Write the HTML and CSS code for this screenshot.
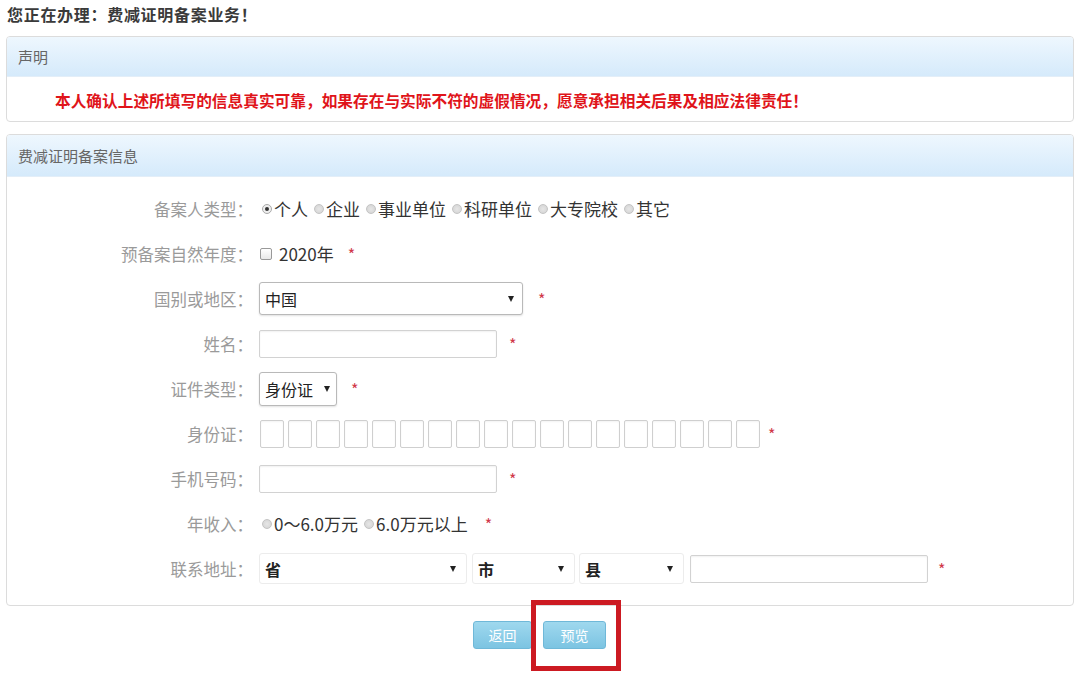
FILE: index.html
```html
<!DOCTYPE html>
<html lang="zh-CN">
<head>
<meta charset="utf-8">
<title>费减证明备案</title>
<link rel="stylesheet" href="styles.css">
</head>
<body>
<h1 class="title">您正在办理<span class="p">：</span>费减证明备案业务<span class="p">！</span></h1>

<section class="panel">
  <div class="panel-head">声明</div>
  <div class="panel-body notice">本人确认上述所填写的信息真实可靠<span class="p">，</span>如果存在与实际不符的虚假情况<span class="p">，</span>愿意承担相关后果及相应法律责任<span class="p">！</span></div>
</section>

<section class="panel panel-form">
  <div class="panel-head">费减证明备案信息</div>
  <div class="panel-body form">
    <div class="row">
      <div class="label">备案人类型<span class="p">：</span></div>
      <div class="ctrl">
        <span class="radio on"></span><span class="opt">个人</span>
        <span class="radio"></span><span class="opt">企业</span>
        <span class="radio"></span><span class="opt">事业单位</span>
        <span class="radio"></span><span class="opt">科研单位</span>
        <span class="radio"></span><span class="opt">大专院校</span>
        <span class="radio"></span><span class="opt">其它</span>
      </div>
    </div>
    <div class="row">
      <div class="label">预备案自然年度<span class="p">：</span></div>
      <div class="ctrl">
        <span class="check"></span><span class="opt year">2020年</span><span class="req">*</span>
      </div>
    </div>
    <div class="row">
      <div class="label">国别或地区<span class="p">：</span></div>
      <div class="ctrl">
        <div class="select sel-country"><span>中国</span><span class="arrow"></span></div><span class="req">*</span>
      </div>
    </div>
    <div class="row">
      <div class="label">姓名<span class="p">：</span></div>
      <div class="ctrl"><div class="input"></div><span class="req">*</span></div>
    </div>
    <div class="row">
      <div class="label">证件类型<span class="p">：</span></div>
      <div class="ctrl">
        <div class="select sel-id"><span>身份证</span><span class="arrow"></span></div><span class="req">*</span>
      </div>
    </div>
    <div class="row">
      <div class="label">身份证<span class="p">：</span></div>
      <div class="ctrl">
        <div class="idboxes">
          <span></span><span></span><span></span><span></span><span></span><span></span>
          <span></span><span></span><span></span><span></span><span></span><span></span>
          <span></span><span></span><span></span><span></span><span></span><span></span>
        </div><span class="req">*</span>
      </div>
    </div>
    <div class="row">
      <div class="label">手机号码<span class="p">：</span></div>
      <div class="ctrl"><div class="input"></div><span class="req">*</span></div>
    </div>
    <div class="row">
      <div class="label">年收入<span class="p">：</span></div>
      <div class="ctrl">
        <span class="radio"></span><span class="opt">0～6.0万元</span>
        <span class="radio"></span><span class="opt">6.0万元以上</span>
        <span class="req">*</span>
      </div>
    </div>
    <div class="row">
      <div class="label">联系地址<span class="p">：</span></div>
      <div class="ctrl addr">
        <div class="select flat sel-prov"><span>省</span><span class="arrow"></span></div>
        <div class="select flat sel-city"><span>市</span><span class="arrow"></span></div>
        <div class="select flat sel-county"><span>县</span><span class="arrow"></span></div>
        <div class="input addr-input"></div>
        <span class="req">*</span>
      </div>
    </div>
  </div>
</section>

<div class="actions">
  <button class="btn btn-back">返回</button>
  <span class="highlight"><button class="btn btn-preview">预览</button></span>
</div>
</body>
</html>
```

FILE: styles.css
```css
*, *::before, *::after { box-sizing: border-box; }
html, body { margin: 0; padding: 0; background: #fff; }
body {
  font-family: "Noto Sans CJK SC", "Noto Sans", "DejaVu Sans", sans-serif;
  color: #333;
  width: 1080px;
  height: 685px;
  overflow: hidden;
}
.p { font-family: "Noto Sans CJK TC", "Noto Sans CJK SC", sans-serif; }
.title {
  margin: 0;
  padding: 5px 0 0 7px;
  height: 36px;
  font-size: 16px;
  line-height: 18px;
  font-weight: bold;
  color: #3a3a3a;
  letter-spacing: 0.7px;
}
.panel {
  margin: 0 6px;
  border: 1px solid #dcdcdc;
  border-radius: 4px;
  background: #fff;
  overflow: hidden;
}
.panel-head {
  height: 40px;
  padding-left: 11px;
  font-size: 15px;
  line-height: 40px;
  color: #666;
  background: linear-gradient(#eef7fe, #d5eafb);
  border-bottom: 1px solid #e3eef8;
}
.notice {
  height: 44px;
  padding: 14px 0 0 48px;
  font-size: 15.7px;
  line-height: 20px;
  font-weight: bold;
  color: #e0141a;
}
.panel-form { margin-top: 12px; }
.panel-form .panel-head { height: 42px; line-height: 42px; }
.form { padding: 9px 0 14px; }
.row {
  display: flex;
  align-items: center;
  height: 45px;
}
.label {
  width: 246px;
  text-align: right;
  font-size: 16.5px;
  color: #9a9a9a;
  white-space: nowrap;
}
.ctrl {
  margin-left: 6px;
  display: flex;
  align-items: center;
  font-size: 17px;
  color: #333;
}
.radio {
  width: 10px;
  height: 10px;
  border-radius: 50%;
  border: 1px solid #c4c4c4;
  background: radial-gradient(circle, #e6e6e6 0, #d2d2d2 100%);
  margin: 0 2px 0 3px;
  position: relative;
}
.radio.on { background: #eee; border-color: #aaa; }
.radio.on::after {
  content: "";
  position: absolute;
  left: 2px; top: 2px;
  width: 4px; height: 4px;
  border-radius: 50%;
  background: #333;
}
.opt { margin-right: 3px; }
.check {
  width: 12px;
  height: 12px;
  border: 1px solid #999;
  border-radius: 2px;
  background: linear-gradient(#fff, #e8e8e8);
  margin: 0 7px 0 1px;
}
.year { margin-right: 0; }
.req {
  color: #d0384a;
  font-size: 16px;
  margin-left: 14px;
}
.select {
  display: flex;
  align-items: center;
  justify-content: space-between;
  border: 1px solid #b9b9b9;
  border-radius: 3px;
  background: #fff;
  box-shadow: 0 1px 2px rgba(0,0,0,0.12);
  padding: 0 8px 0 5px;
  font-size: 16px;
  color: #222;
}
.arrow {
  width: 0; height: 0;
  border-left: 3.5px solid transparent;
  border-right: 3.5px solid transparent;
  border-top: 6px solid #222;
}
.sel-country { width: 264px; height: 33px; }
.sel-country + .req { margin-left: 15px; }
.sel-id { width: 78px; height: 34px; padding-right: 6px; }
.input {
  width: 238px;
  height: 28px;
  border: 1px solid #d2d2d2;
  border-radius: 2px;
  box-shadow: inset 0 1px 2px rgba(0,0,0,0.06);
  background: #fff;
}
.input + .req { margin-left: 12px; }
.idboxes { display: flex; gap: 4px; margin-left: 1px; }
.idboxes span {
  width: 24px;
  height: 28px;
  border: 1px solid #cfcfcf;
  border-radius: 2px;
  box-shadow: inset 0 1px 2px rgba(0,0,0,0.05);
}
.idboxes + .req { margin-left: 8px; }
.select.flat {
  height: 31px;
  border: 1px solid #ececec;
  box-shadow: none;
  font-weight: bold;
  padding-right: 10px;
}
.sel-prov { width: 208px; }
.sel-city { width: 103px; margin-left: 5px; }
.sel-county { width: 105px; margin-left: 4px; }
.addr-input { margin-left: 6px; height: 28px; }
.addr .req { margin-left: 10px; }
.actions {
  display: flex;
  justify-content: center;
  align-items: center;
  gap: 11px;
  padding: 15px 0 0 0;
  margin-left: -1px;
}
.btn {
  height: 28px;
  border: 1px solid #6fb8d8;
  border-radius: 3px;
  background: linear-gradient(#9fd8ee, #7cc4e2);
  color: #fff;
  font-family: inherit;
  font-size: 14px;
  padding: 0;
  cursor: pointer;
}
.btn-back { width: 59px; }
.btn-preview { width: 63px; }
.highlight { position: relative; display: inline-flex; }
.highlight::after {
  content: "";
  position: absolute;
  left: -12px;
  top: -21px;
  width: 90px;
  height: 71px;
  border: 5px solid #cc1a22;
  pointer-events: none;
}
```
